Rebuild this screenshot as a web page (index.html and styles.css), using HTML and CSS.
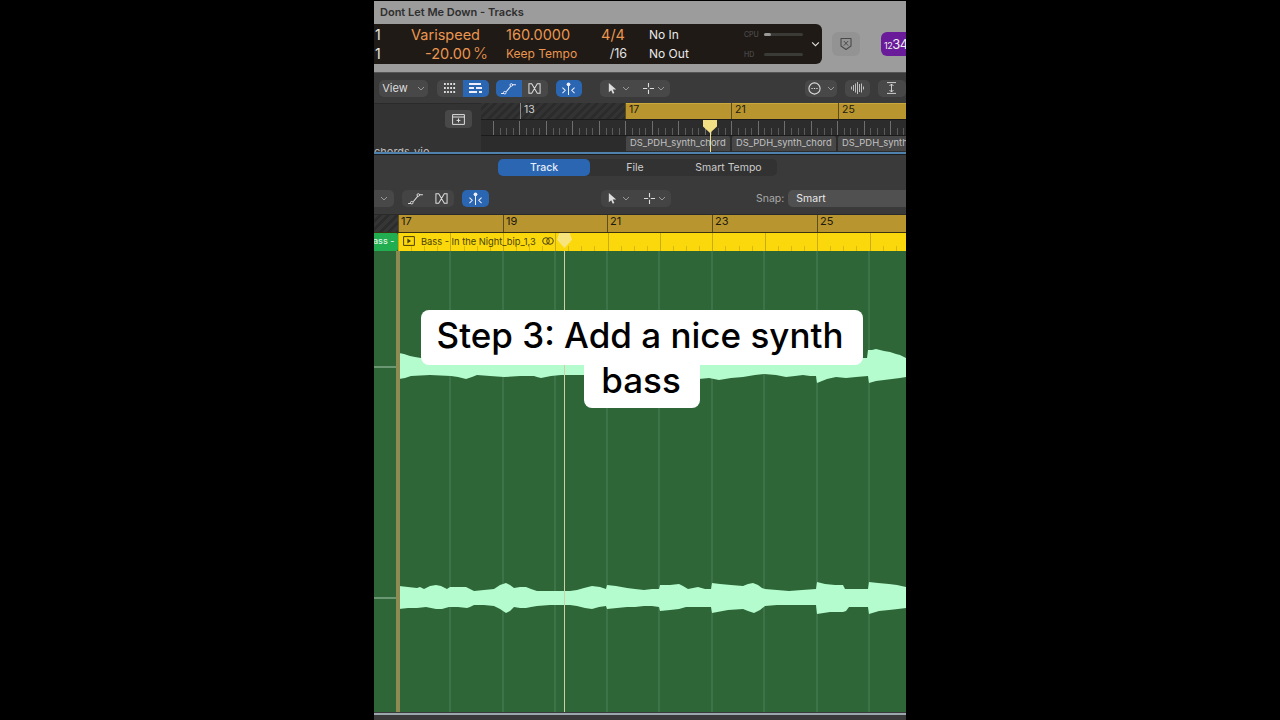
FILE: index.html
```html
<!DOCTYPE html>
<html lang="en">
<head>
    <meta charset="UTF-8">
    <title>Dont Let Me Down - Tracks</title>
    <link rel="stylesheet" href="styles.css">
</head>
<body>
    <svg class="defs" width="0" height="0">
        <symbol id="i-curve" viewBox="0 0 18 14"><path d="M1 12.5h3M6.5 10.5l5-6M13 3h4" fill="none" stroke="currentColor" stroke-width="1.1"/><circle cx="5" cy="11.5" r="1.4" fill="none" stroke="currentColor"/><circle cx="12" cy="3.2" r="1.4" fill="none" stroke="currentColor"/></symbol>
        <symbol id="i-flex" viewBox="0 0 14 14"><path d="M1 2h3l6 10h3V2h-3L4 12H1z" fill="none" stroke="currentColor" stroke-width="1.1"/></symbol>
        <symbol id="i-pin" viewBox="0 0 16 14"><path d="M8 4v10" stroke="currentColor" stroke-width="1.1"/><circle cx="8" cy="2.5" r="2" fill="currentColor"/><path d="M1.5 6l3 3-3 3M14.5 6l-3 3 3 3" fill="none" stroke="currentColor" stroke-width="1.1"/></symbol>
        <symbol id="i-arrow" viewBox="0 0 10 12"><path d="M1 0v10l2.6-2.2 1.7 3.8 1.7-.8-1.7-3.6H9z" fill="currentColor"/></symbol>
        <symbol id="i-plus" viewBox="0 0 12 12"><path d="M6 0v4.6M6 7.4V12M0 6h4.6M7.4 6H12" stroke="currentColor" stroke-width="1.2"/></symbol>
        <symbol id="i-chev" viewBox="0 0 8 5"><path d="M1 1l3 3 3-3" fill="none" stroke="currentColor" stroke-width="1"/></symbol>
    </svg>

    <div class="stage">
        <div class="title-bar">Dont Let Me Down - Tracks</div>

        <div class="lcd-row">
            <div class="lcd">
                <div class="lcd-col col-pos"><span>1</span><span>1</span></div>
                <div class="lcd-col col-speed"><span class="big">Varispeed</span><span class="big">-20.00<i class="pct">%</i></span></div>
                <div class="lcd-col col-tempo"><span class="big">160.0000</span><span class="small">Keep Tempo</span></div>
                <div class="lcd-col col-sig"><span class="big">4/4</span><span class="white">/16</span></div>
                <div class="lcd-col col-io"><span>No In</span><span>No Out</span></div>
                <div class="meters">
                    <div class="meter"><span>CPU</span><div class="meter-bar"><b></b></div></div>
                    <div class="meter"><span>HD</span><div class="meter-bar"></div></div>
                </div>
                <svg class="lcd-chev"><use href="#i-chev"/></svg>
            </div>
            <div class="close-btn">
                <svg width="12" height="14" viewBox="0 0 12 14"><path d="M1 1.5h10v7.5l-5 3.5-5-3.5z" fill="none" stroke="#4a4a4a" stroke-width="1.1" stroke-linejoin="round"/><path d="M3.8 4l4.4 4.6M8.2 4L3.8 8.6" stroke="#4a4a4a"/></svg>
            </div>
            <div class="count-btn"><small>12</small>34</div>
        </div>
        <div class="gray-strip"></div>

        <div class="toolbar top-tools">
            <div class="btn view-btn">View<svg class="chev"><use href="#i-chev"/></svg></div>
            <div class="group g-view">
                <div class="cell">
                    <svg width="12" height="10" viewBox="0 0 12 10"><path d="M0 1h12M0 5h12M0 9h12" stroke="currentColor" stroke-width="1.8" stroke-dasharray="1.8 1.3"/></svg>
                </div>
                <div class="cell on">
                    <svg width="13" height="10" viewBox="0 0 13 10"><path d="M0 1h12M0 5h5M7 5h6M0 9h8M10 9h3" stroke="currentColor" stroke-width="1.8"/></svg>
                </div>
            </div>
            <div class="group g-auto">
                <div class="cell on"><svg class="ico"><use href="#i-curve"/></svg></div>
                <div class="cell"><svg class="ico"><use href="#i-flex"/></svg></div>
            </div>
            <div class="btn on pin-btn"><svg class="ico"><use href="#i-pin"/></svg></div>
            <div class="group g-tools">
                <div class="cell cell-arrow"><svg class="ico-sm"><use href="#i-arrow"/></svg><svg class="chev"><use href="#i-chev"/></svg></div>
                <div class="cell cell-plus"><svg class="ico-sm"><use href="#i-plus"/></svg><svg class="chev"><use href="#i-chev"/></svg></div>
            </div>
            <div class="btn smile-btn">
                <svg width="13" height="13" viewBox="0 0 13 13"><circle cx="6.5" cy="6.5" r="5.6" fill="none" stroke="currentColor" stroke-width="1.1"/><path d="M3.4 6.5h1.3M5.85 6.5h1.3M8.3 6.5h1.3" stroke="currentColor" stroke-width="1.2"/></svg>
                <svg class="chev"><use href="#i-chev"/></svg>
            </div>
            <div class="btn wave-btn">
                <svg width="13" height="12" viewBox="0 0 13 12"><path d="M.5 4.5v3M2.5 3v6M4.5 1.5v9M6.5 0v12M8.5 2v8M10.5 1.5v9M12.5 4.5v3" stroke="currentColor" stroke-width=".8"/></svg>
            </div>
            <div class="btn fit-btn">
                <svg width="11" height="12" viewBox="0 0 11 12"><path d="M1 .6h9M1 11.4h9M5.5 2v8M3.5 4l2-2 2 2M3.5 8l2 2 2-2" fill="none" stroke="currentColor" stroke-width=".9"/></svg>
            </div>
        </div>

        <div class="arrange">
            <div class="arrange-head">
                <div class="folder-btn">
                    <svg width="13" height="11" viewBox="0 0 13 11"><path d="M.6.6h11.8v9.8H.6zM.6 3h11.8" fill="none" stroke="#ddd"/><path d="M6.5 4.4v4M4.6 6.4h3.8" stroke="#ddd"/></svg>
                </div>
                <div class="track-name">chords_vio</div>
            </div>
            <div class="arrange-time">
                <div class="ruler-top">
                    <div class="hatch"></div>
                    <div class="gold"></div>
                    <span class="bar-mark grey-mark" style="left: 39px">13</span>
                    <span class="bar-mark" style="left: 144px">17</span>
                    <span class="bar-mark" style="left: 250px">21</span>
                    <span class="bar-mark" style="left: 357px">25</span>
                </div>
                <div class="ruler-ticks"></div>
                <div class="chips">
                    <div class="chip">DS_PDH_synth_chord</div>
                    <div class="chip">DS_PDH_synth_chord</div>
                    <div class="chip">DS_PDH_synth_chord</div>
                </div>
                <div class="mini-head"></div>
            </div>
        </div>
        <div class="blue-line"></div>

        <div class="editor">
            <div class="tabs">
                <div class="tab tab-on">Track</div>
                <div class="tab tab-file">File</div>
                <div class="tab tab-tempo">Smart Tempo</div>
            </div>
            <div class="toolbar sub-tools">
                <div class="btn stub"><svg class="chev"><use href="#i-chev"/></svg></div>
                <div class="group g-auto2">
                    <div class="cell"><svg class="ico"><use href="#i-curve"/></svg></div>
                    <div class="cell"><svg class="ico"><use href="#i-flex"/></svg></div>
                </div>
                <div class="btn on pin-btn"><svg class="ico"><use href="#i-pin"/></svg></div>
                <div class="group g-tools2">
                    <div class="cell cell-arrow"><svg class="ico-sm"><use href="#i-arrow"/></svg><svg class="chev"><use href="#i-chev"/></svg></div>
                    <div class="cell cell-plus"><svg class="ico-sm"><use href="#i-plus"/></svg><svg class="chev"><use href="#i-chev"/></svg></div>
                </div>
                <span class="snap-label">Snap:</span>
                <div class="snap-select">Smart</div>
            </div>

            <div class="ruler-main">
                <span class="main-mark" style="left: 24px">17</span>
                <span class="main-mark" style="left: 129px">19</span>
                <span class="main-mark" style="left: 233px">21</span>
                <span class="main-mark" style="left: 338px">23</span>
                <span class="main-mark" style="left: 443px">25</span>
            </div>

            <div class="region-row">
                <div class="track-chip">ass -</div>
                <div class="region">
                    <svg class="region-play" width="12" height="10" viewBox="0 0 12 10"><path d="M.6.6h10.8v8.8H.6z" fill="none" stroke="#4a3f08"/><path d="M4.4 2.6L8 5 4.4 7.4z" fill="#4a3f08"/></svg>
                    <span class="region-name">Bass - In the Night_bip_1,3</span>
                    <svg class="region-loop" width="12" height="8" viewBox="0 0 12 8"><circle cx="4" cy="4" r="3.3" fill="none" stroke="#4a3f08"/><circle cx="8" cy="4" r="3.3" fill="none" stroke="#4a3f08"/></svg>
                </div>
            </div>

            <div class="lane">
                <svg class="wave" width="532" height="461" viewBox="374 251 532 461">
                    <path d="M374 367h22M374 598h22" stroke="#a9c8ae" stroke-width="1"/>
                    <path d="M450 251v461M503 251v461M555 251v461M607 251v461M659 251v461M712 251v461M764 251v461M817 251v461M869 251v461" stroke="#4d8058" stroke-width="1"/>
                    <path class="wave-fill" d="M399 353L404 354L410 356L415 357L421 358L584 360L699 360L864 358L867 358L868 350L872 350L876 349L880 350L884 351L890 352L896 354L900 355L906 358V377L900 378L892 379L884 380L876 381L869 383L868 376L856 377L846 378L836 377L827 379L817 383L816 376L810 376L803 375L795 376L786 377L776 375L764 374L755 375L743 377L731 378L719 380L714 379L709 378L699 379L584 375L572 375L561 375L551 376L541 378L537 377L534 376L520 376L504 377L490 376L477 375L472 377L466 379L458 377L451 376L430 375L411 376L405 378L399 379Z"/>
                    <path class="wave-fill" d="M399 586L408 587L417 588L420 587L424 589L430 586L436 585L441 586L447 589L450 587L458 587L466 587L470 589L474 591L484 590L494 589L500 585L506 583L510 585L514 588L520 587L526 587L531 589L537 591L550 591L564 591L570 591L577 590L584 588L592 586L600 587L606 589L607 585L616 586L627 588L635 589L644 590L652 589L659 589L660 585L670 585L679 584L683 586L688 589L693 588L698 587L705 589L711 589L712 583L720 584L731 585L743 586L748 584L753 583L758 585L762 588L765 589L777 590L789 591L802 590L816 589L817 582L825 584L835 585L843 585L845 589L849 589L858 589L868 589L869 582L878 583L889 584L897 585L906 587V608L898 609L889 610L879 611L869 614L868 607L858 607L849 607L846 611L843 612L830 612L817 614L816 605L802 605L789 605L777 605L765 606L760 610L754 613L748 611L743 609L728 610L712 613L711 607L699 607L686 607L679 609L670 610L660 611L659 607L652 606L644 606L635 607L627 607L617 608L607 609L606 606L599 607L592 609L585 608L577 606L570 605L564 605L550 605L537 606L531 607L526 608L520 608L514 607L510 611L506 613L500 609L494 606L484 605L474 605L470 607L467 608L458 607L449 607L442 609L436 609L426 607L417 608L408 608L399 609Z"/>
                </svg>
                <div class="start-bar"></div>
                <div class="playhead"></div>
            </div>
            <div class="playhead-head"></div>
            <div class="bottom-line"></div>
        </div>

        <div class="caption">
            <span>Step 3: Add a nice synth</span>
            <span>bass</span>
        </div>
    </div>
</body>
</html>
```

FILE: styles.css
```css
* {
    box-sizing: border-box;
}
body {
    margin: 0;
    background-color: #000;
    font-family: Inter, "Liberation Sans", sans-serif;
}
.defs {
    position: absolute;
}
.stage {
    position: relative;
    width: 532px;
    height: 720px;
    margin: 0 auto;
    overflow: hidden;
    background-color: #000;
    padding-top: 1px;
}

/* top window */
.title-bar {
    height: 23px;
    padding-left: 6px;
    background-color: #9c9c9c;
    color: #2e2e2e;
    font-size: 11px;
    font-weight: 600;
    line-height: 22px;
}
.lcd-row {
    display: flex;
    align-items: center;
    height: 40px;
    background-color: #9c9c9c;
}
.lcd {
    display: flex;
    flex-shrink: 0;
    position: relative;
    width: 448px;
    height: 40px;
    background-color: #1f1a15;
    border-radius: 0 6px 6px 0;
    color: #e9e9e9;
    font-size: 12px;
}
.lcd-col {
    display: flex;
    flex-direction: column;
    justify-content: space-between;
    padding: 1px 0 2px;
    line-height: 19px;
    white-space: nowrap;
}
.col-pos {
    width: 36px;
    padding-left: 1px;
    font-size: 14px;
}
.col-speed {
    width: 78px;
    align-items: flex-end;
}
.col-tempo {
    width: 70px;
    margin-left: 18px;
}
.col-sig {
    width: 49px;
    align-items: flex-end;
}
.col-io {
    margin-left: 24px;
    width: 95px;
}
.big {
    color: #ea9650;
    font-size: 14.5px;
}
.col-speed .big:first-child {
    margin-right: 8px;
}
.pct {
    font-style: normal;
    font-weight: 300;
    font-size: 16px;
    margin-left: 2px;
}
.small {
    color: #ea9650;
    font-size: 12px;
}
.white {
    color: #e4e4e4;
    font-size: 12.5px;
    margin-right: -2px;
}
.meters {
    display: flex;
    flex-direction: column;
    justify-content: center;
    gap: 11px;
    color: #555;
    font-size: 7px;
}
.meter {
    display: flex;
    align-items: center;
    height: 9px;
}
.meter span {
    width: 20px;
}
.meter-bar {
    width: 39px;
    height: 3px;
    background-color: #3a3a36;
    border-radius: 2px;
}
.meter-bar b {
    display: block;
    width: 7px;
    height: 3px;
    background-color: #999;
    border-radius: 2px;
}
.lcd-chev {
    position: absolute;
    right: 2px;
    top: 17px;
    width: 9px;
    height: 6px;
    color: #ddd;
}
.close-btn {
    display: flex;
    flex-shrink: 0;
    align-items: center;
    justify-content: center;
    width: 28px;
    height: 24px;
    margin-left: 10px;
    background-color: #939393;
    border-radius: 6px;
}
.count-btn {
    flex-shrink: 0;
    width: 36px;
    height: 24px;
    margin-left: 21px;
    padding-left: 3px;
    background-color: #6a1b9a;
    border-radius: 6px;
    color: #eee;
    font-size: 13px;
    line-height: 24px;
    letter-spacing: -0.5px;
}
.count-btn small {
    font-size: 9px;
}
.gray-strip {
    height: 9px;
    background-color: #9c9c9c;
    border-bottom: 1px solid #555;
}

/* toolbars */
.toolbar {
    display: flex;
    align-items: center;
    color: #ddd;
}
.top-tools {
    height: 30px;
    background-color: #3a3a3a;
}
.btn,
.group {
    display: flex;
    align-items: center;
    height: 17px;
    background-color: #484848;
    border-radius: 5px;
    font-size: 11px;
}
.btn {
    justify-content: center;
    gap: 6px;
}
.group {
    overflow: hidden;
}
.cell {
    display: flex;
    flex: 1;
    align-items: center;
    justify-content: center;
    gap: 5px;
    height: 100%;
}
.cell-arrow {
    gap: 4px;
    padding-left: 2px;
}
.cell-plus {
    gap: 3px;
    padding-left: 5px;
}
.on {
    background-color: #2a66b2;
    color: #eef;
}
.chev {
    width: 8px;
    height: 5px;
    color: #999;
}
.ico {
    width: 17px;
    height: 13px;
}
.ico-sm {
    width: 11px;
    height: 11px;
}
.view-btn {
    width: 49px;
    margin-left: 5px;
    gap: 9px;
    color: #ddd;
}
.g-view {
    width: 52px;
    margin-left: 9px;
}
.g-auto {
    width: 52px;
    margin-left: 7px;
}
.top-tools .pin-btn {
    width: 27px;
    margin-left: 8px;
}
.g-tools {
    width: 70px;
    margin-left: 18px;
}
.smile-btn {
    width: 32px;
    margin-left: 135px;
}
.wave-btn {
    width: 25px;
    margin-left: 8px;
}
.fit-btn {
    width: 28px;
    margin-left: 8px;
    flex-shrink: 0;
}

/* arrange area */
.arrange {
    display: flex;
    height: 49px;
}
.arrange-head {
    position: relative;
    width: 107px;
    background-color: #333;
    border-top: 1px solid #2a2a2a;
    overflow: hidden;
}
.folder-btn {
    position: absolute;
    left: 71px;
    top: 6px;
    display: flex;
    align-items: center;
    justify-content: center;
    width: 27px;
    height: 18px;
    background-color: #484848;
    border-radius: 4px;
}
.track-name {
    position: absolute;
    left: 0;
    top: 41px;
    color: #bbb;
    font-size: 11px;
}
.arrange-time {
    position: relative;
    flex: 1;
    background-color: #2c2c2c;
    overflow: hidden;
}
.ruler-top {
    display: flex;
    height: 16px;
}
.hatch {
    width: 144px;
    background: repeating-linear-gradient(135deg, #333 0 3px, #2b2b2b 3px 6px);
}
.gold {
    flex: 1;
    background-color: #b8952f;
    border-top: 1px solid #cba83c;
}
.bar-mark {
    position: absolute;
    top: 0;
    height: 16px;
    padding-left: 3px;
    border-left: 1px solid #5c4d1c;
    color: #1d1a10;
    font-size: 10.5px;
    line-height: 14px;
}
.grey-mark {
    color: #cfcfcf;
    border-left-color: #888;
}
.ruler-ticks {
    height: 16px;
    border-top: 1px solid #1b1b1b;
    background-image:
        repeating-linear-gradient(90deg, #6e6e6e 0 1px, transparent 1px 26.5px),
        repeating-linear-gradient(90deg, #5a5a5a 0 1px, transparent 1px 6.62px);
    background-size: 100% 14px, 100% 7px;
    background-position: 12px 100%, 12px 100%;
    background-repeat: no-repeat;
}
.chips {
    display: flex;
    gap: 2px;
    height: 17px;
    padding-left: 145px;
    border-top: 1px solid #1b1b1b;
}
.chip {
    flex-shrink: 0;
    width: 104px;
    height: 15px;
    padding-left: 4px;
    background-color: #474747;
    border-radius: 2px 2px 0 0;
    color: #c2c2c2;
    font-size: 9.4px;
    line-height: 14px;
    white-space: nowrap;
}
.mini-head {
    position: absolute;
    left: 222px;
    top: 17px;
    width: 14px;
    height: 33px;
    background: linear-gradient(#f3e084, #f3e084) center 0 / 1px 100% no-repeat;
}
.mini-head::before {
    content: "";
    position: absolute;
    top: 0;
    left: 0;
    width: 14px;
    height: 13px;
    background-color: #f3e084;
    clip-path: polygon(0 0, 100% 0, 100% 50%, 50% 100%, 0 50%);
}
.blue-line {
    height: 3px;
    background-color: #4f83ad;
    border-bottom: 1px solid #1c1c1c;
}

/* editor */
.editor {
    position: relative;
    height: 567px;
    background-color: #3a3a3a;
}
.tabs {
    display: flex;
    width: 279px;
    height: 17px;
    margin: 4px 0 0 124px;
    position: absolute;
    background-color: #323232;
    border-radius: 5px;
    color: #ccc;
    font-size: 10.5px;
    line-height: 17px;
    text-align: center;
}
.tab-on {
    width: 92px;
    background-color: #2a66b2;
    border-radius: 5px;
    color: #e6eefa;
    font-weight: 500;
}
.tab-file {
    width: 90px;
}
.tab-tempo {
    width: 97px;
}
.sub-tools {
    height: 60px;
    padding-top: 28px;
    border-bottom: 1px solid #2a2a2a;
}
.stub {
    width: 20px;
    border-radius: 0 5px 5px 0;
}
.g-auto2 {
    width: 52px;
    margin-left: 8px;
    background-color: #444;
}
.sub-tools .pin-btn {
    width: 27px;
    margin-left: 8px;
}
.g-tools2 {
    width: 70px;
    margin-left: 112px;
    background-color: #444;
}
.snap-label {
    margin-left: 85px;
    color: #a8a8a8;
    font-size: 10.5px;
}
.snap-select {
    flex: 1;
    height: 17px;
    margin-left: 4px;
    padding-left: 8px;
    background-color: #505050;
    border-radius: 5px 0 0 5px;
    color: #e8e8e8;
    font-size: 10.5px;
    line-height: 17px;
}
.ruler-main {
    position: relative;
    height: 18px;
    background: linear-gradient(#b8952f, #b8952f) 24px 0 no-repeat,
        repeating-linear-gradient(135deg, #363636 0 3px, #2c2c2c 3px 6px);
    border-bottom: 1px solid #3a3110;
}
.main-mark {
    position: absolute;
    top: 0;
    height: 17px;
    padding-left: 2px;
    border-left: 1px solid #5c4d1c;
    color: #1d1a10;
    font-size: 11px;
    line-height: 13px;
}
.region-row {
    display: flex;
    height: 18px;
}
.track-chip {
    width: 24px;
    background-color: #22ad50;
    border-radius: 0 2px 2px 0;
    color: #dff5e4;
    font-size: 9px;
    font-weight: 500;
    line-height: 16px;
    text-indent: -1px;
    white-space: nowrap;
    overflow: hidden;
}
.region {
    display: flex;
    flex: 1;
    align-items: center;
    height: 18px;
    padding: 0 0 2px 5px;
    background-color: #fbd80c;
    background-image:
        repeating-linear-gradient(90deg, #c9ac10 0 1px, transparent 1px 52.4px),
        repeating-linear-gradient(90deg, #d6b80f 0 1px, transparent 1px 13.1px);
    background-size: 100% 100%, 100% 5px;
    background-position: 0 0, 0 100%;
    background-repeat: no-repeat;
}
.region-name {
    margin-left: 6px;
    color: #4a3f08;
    font-size: 9.3px;
    white-space: nowrap;
}
.region-loop {
    margin-left: 6px;
}
.lane {
    position: relative;
    height: 461px;
    background-color: #2e6638;
}
.wave {
    display: block;
}
.wave-fill {
    fill: #b4fccd;
}
.start-bar {
    position: absolute;
    left: 22px;
    top: 0;
    width: 4px;
    height: 461px;
    background-color: #8d8a52;
}
.playhead {
    position: absolute;
    left: 190px;
    top: 0;
    width: 1px;
    height: 461px;
    background-color: #cfd0a5;
}
.playhead-head {
    position: absolute;
    left: 183px;
    top: 78px;
    width: 15px;
    height: 15px;
    background-color: #f7e47c;
    clip-path: polygon(15% 0, 85% 0, 100% 45%, 50% 100%, 0 45%);
}
.bottom-line {
    height: 2px;
    margin-top: 1px;
    background-color: #9aa7ad;
}

/* caption sits over the whole video */
.caption {
    position: absolute;
    left: 0;
    right: 0;
    top: 310px;
    display: flex;
    flex-direction: column;
    align-items: center;
    color: #000;
    font-size: 35px;
    font-weight: 500;
    line-height: 45px;
}
.caption span {
    padding: 3px 20px 7px 16px;
    margin-left: 4px;
    background-color: #fff;
    border-radius: 8px;
    white-space: nowrap;
}
.caption span + span {
    margin-top: -7px;
    padding: 0 19px 5px 17px;
    border-radius: 0 0 8px 8px;
}
```
